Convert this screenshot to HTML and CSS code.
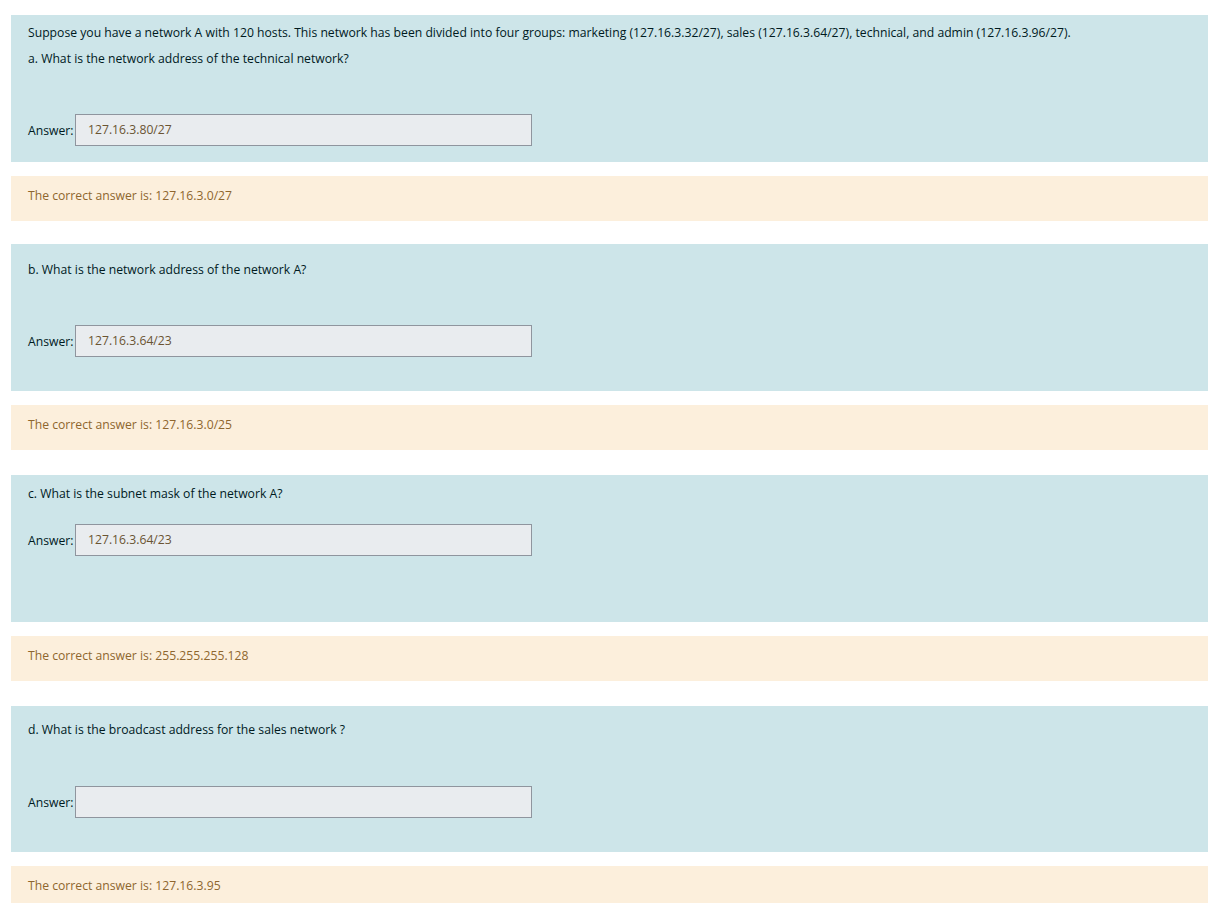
FILE: index.html
```html
<!DOCTYPE html>
<html>
<head>
<meta charset="utf-8">
<link rel="stylesheet" href="styles.css">
</head>
<body>
<div class="page">
  <section class="formulation q-a">
    <p class="qtext">Suppose you have a network A with 120 hosts. This network has been divided into four groups: marketing (127.16.3.32/27), sales (127.16.3.64/27), technical, and admin (127.16.3.96/27).</p>
    <p class="qtext line2">a. What is the network address of the technical network?</p>
    <div class="answer"><span class="label">Answer:</span><div class="input">127.16.3.80/27</div></div>
  </section>
  <section class="outcome">The correct answer is: 127.16.3.0/27</section>

  <section class="formulation q-b">
    <p class="qtext">b. What is the network address of the network A?</p>
    <div class="answer"><span class="label">Answer:</span><div class="input">127.16.3.64/23</div></div>
  </section>
  <section class="outcome">The correct answer is: 127.16.3.0/25</section>

  <section class="formulation q-c">
    <p class="qtext">c. What is the subnet mask of the network A?</p>
    <div class="answer"><span class="label">Answer:</span><div class="input">127.16.3.64/23</div></div>
  </section>
  <section class="outcome">The correct answer is: 255.255.255.128</section>

  <section class="formulation q-d">
    <p class="qtext">d. What is the broadcast address for the sales network ?</p>
    <div class="answer"><span class="label">Answer:</span><div class="input"></div></div>
  </section>
  <section class="outcome">The correct answer is: 127.16.3.95</section>
</div>
</body>
</html>
```

FILE: styles.css
```css
html, body {
  margin: 0;
  padding: 0;
  background: #ffffff;
}
body {
  font-family: "Open Sans", "Noto Sans", sans-serif;
  font-size: 12.2px;
  color: #001a1e;
}
.page {
  margin-left: 11px;
  padding-top: 15px;
}
.formulation {
  background: #cde5e9;
  padding: 0 17px;
  margin-top: 24px;
}
.formulation.q-a { margin-top: 0; padding-top: 8px; padding-bottom: 16px; }
.formulation.q-b { margin-top: 23px; padding-top: 16px; padding-bottom: 34px; }
.formulation.q-c { margin-top: 25px; padding-top: 9px; padding-bottom: 66px; }
.formulation.q-d { margin-top: 25px; padding-top: 14px; padding-bottom: 34px; }
.qtext {
  margin: 0;
  line-height: 20px;
}
.qtext.line2 { margin-top: 6px; }
.answer {
  display: flex;
  align-items: center;
  margin-top: 45px;
}
.q-c .answer { margin-top: 20px; }
.q-d .answer { margin-top: 46px; }
.label {
  width: 47px;
}
.input {
  width: 431px;
  height: 30px;
  line-height: 30px;
  background: #e9ecef;
  border: 1px solid #8f959e;
  padding: 0 12px;
  color: #6a5433;
}
.outcome {
  background: #fcefdc;
  color: #8e662e;
  margin-top: 14px;
  padding: 10px 17px 15px;
  line-height: 20px;
}
```
